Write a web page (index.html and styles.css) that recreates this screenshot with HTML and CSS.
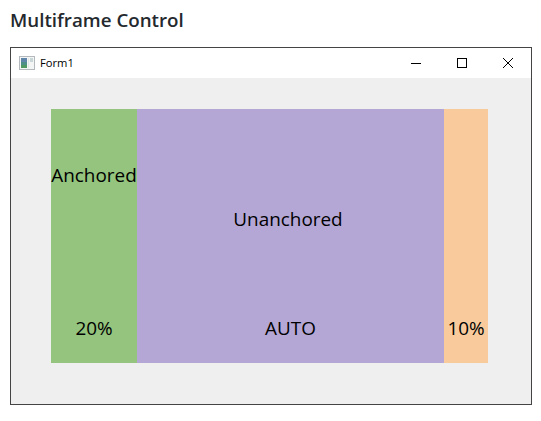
FILE: index.html
```html
<!DOCTYPE html>
<html lang="en">
<head>
  <meta charset="UTF-8">
  <title>Multiframe Control</title>
  <link rel="stylesheet" href="styles.css">
</head>
<body>
  <h2 class="page-title">Multiframe Control</h2>
  <div class="window">
    <div class="titlebar">
      <svg class="app-icon" width="16" height="14" viewBox="0 0 16 14">
        <rect x="0.5" y="0.5" width="15" height="13" fill="#f4f6f6" stroke="#b4b9bd"/>
        <rect x="2" y="2" width="6" height="10" fill="#4f8f8a"/>
        <rect x="2" y="2" width="6" height="4" fill="#5f86a8"/>
        <rect x="2" y="9" width="6" height="3" fill="#4f9a62"/>
        <rect x="9" y="2" width="1" height="10" fill="#dfe6e6"/>
        <rect x="11" y="2" width="3" height="4" fill="#c9d6d8"/>
      </svg>
      <span class="form-name">Form1</span>
      <div class="window-buttons">
        <svg class="win-btn" width="46" height="30" viewBox="0 0 46 30">
          <path d="M18 15.5h10" stroke="#000" fill="none"/>
        </svg>
        <svg class="win-btn" width="46" height="30" viewBox="0 0 46 30">
          <rect x="18.5" y="10.5" width="9" height="9" stroke="#000" fill="none"/>
        </svg>
        <svg class="win-btn" width="46" height="30" viewBox="0 0 46 30">
          <path d="M18 10l10 10M28 10l-10 10" stroke="#000" fill="none"/>
        </svg>
      </div>
    </div>
    <div class="client">
      <div class="frames">
        <div class="frame frame-green">
          <span class="label-top">Anchored</span>
          <span class="label-bottom">20%</span>
        </div>
        <div class="frame frame-purple">
          <span class="label-middle">Unanchored</span>
          <span class="label-bottom">AUTO</span>
        </div>
        <div class="frame frame-orange">
          <span class="label-bottom">10%</span>
        </div>
      </div>
    </div>
  </div>
</body>
</html>
```

FILE: styles.css
```css
* {
  margin: 0;
  padding: 0;
  box-sizing: border-box;
}

body {
  font-family: "Open Sans", "Noto Sans", sans-serif;
  background-color: #fff;
  color: #000;
  padding: 8px 9px 0 10px;
}

.page-title {
  font-size: 18.75px;
  line-height: 24px;
  font-weight: 600;
  color: #24292e;
  margin-bottom: 15px;
}

.window {
  width: 522px;
  height: 358px;
  border: 1px solid #444;
  display: flex;
  flex-direction: column;
}

.titlebar {
  height: 30px;
  background-color: #fff;
  display: flex;
  align-items: center;
  padding-left: 8px;
}

.app-icon {
  margin-right: 5px;
}

.form-name {
  font-size: 11.2px;
  margin-top: -1px;
}

.window-buttons {
  margin-left: auto;
  display: flex;
}

.client {
  flex: 1;
  background-color: #efefef;
  padding: 31px 43px 41px 40px;
}

.frames {
  height: 254px;
  display: flex;
}

.frame {
  display: flex;
  flex-direction: column;
  align-items: center;
  font-size: 18.9px;
  line-height: 24px;
  padding-bottom: 23px;
}

.frame-green {
  width: 86px;
  background-color: #94c47d;
}

.frame-purple {
  width: 307px;
  background-color: #b4a7d6;
}

.frame-orange {
  width: 44px;
  background-color: #f9cb9c;
}

.label-top {
  margin-top: 54px;
}

.label-middle {
  margin-top: 98px;
  margin-right: 5px;
}

.label-bottom {
  margin-top: auto;
}
```
